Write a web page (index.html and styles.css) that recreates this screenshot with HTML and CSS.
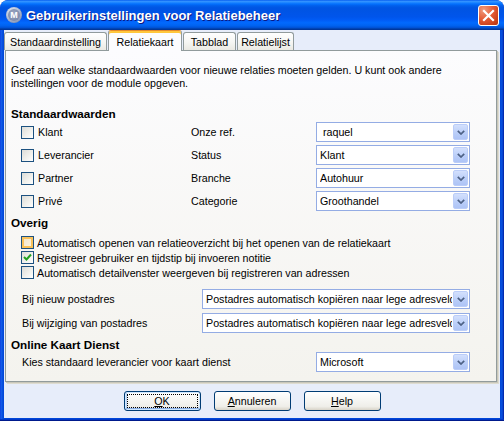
FILE: index.html
```html
<!DOCTYPE html>
<html lang="nl">
<head>
<meta charset="utf-8">
<title>Gebruikerinstellingen voor Relatiebeheer</title>
<link rel="stylesheet" href="styles.css">
</head>
<body>
<div class="window">
  <div class="titlebar">
    <span class="app-icon"><span class="app-ring">M</span></span>
    <span class="title">Gebruikerinstellingen voor Relatiebeheer</span>
    <span class="close">
      <svg width="21" height="21" viewBox="0 0 21 21"><path d="M6 6 L15 15 M15 6 L6 15" stroke="#fff" stroke-width="2.2" stroke-linecap="square" fill="none"/></svg>
    </span>
  </div>
  <div class="client">
    <div class="tabs">
      <div class="tab tab-std">Standaardinstelling</div>
      <div class="tab tab-active">Relatiekaart</div>
      <div class="tab tab-tab">Tabblad</div>
      <div class="tab tab-lijst">Relatielijst</div>
    </div>
    <div class="panel">
      <p class="intro">Geef aan welke standaardwaarden voor nieuwe relaties moeten gelden. U kunt ook andere<br>instellingen voor de module opgeven.</p>

      <h2 class="heading">Standaardwaarden</h2>
      <div class="grid-std">
        <div class="chk"><span class="box"></span>Klant</div>
        <div class="lbl">Onze ref.</div>
        <div class="combo"><span class="txt">&nbsp;raquel</span><span class="drop"><svg width="8" height="5" viewBox="0 0 8 5"><polyline points="0.8,0.8 4,4 7.2,0.8" fill="none" stroke="#4D6185" stroke-width="1.7"/></svg></span></div>

        <div class="chk"><span class="box"></span>Leverancier</div>
        <div class="lbl">Status</div>
        <div class="combo"><span class="txt">Klant</span><span class="drop"><svg width="8" height="5" viewBox="0 0 8 5"><polyline points="0.8,0.8 4,4 7.2,0.8" fill="none" stroke="#4D6185" stroke-width="1.7"/></svg></span></div>

        <div class="chk"><span class="box"></span>Partner</div>
        <div class="lbl">Branche</div>
        <div class="combo"><span class="txt">Autohuur</span><span class="drop"><svg width="8" height="5" viewBox="0 0 8 5"><polyline points="0.8,0.8 4,4 7.2,0.8" fill="none" stroke="#4D6185" stroke-width="1.7"/></svg></span></div>

        <div class="chk"><span class="box"></span>Privé</div>
        <div class="lbl">Categorie</div>
        <div class="combo"><span class="txt">Groothandel</span><span class="drop"><svg width="8" height="5" viewBox="0 0 8 5"><polyline points="0.8,0.8 4,4 7.2,0.8" fill="none" stroke="#4D6185" stroke-width="1.7"/></svg></span></div>
      </div>

      <h2 class="heading heading-overig">Overig</h2>
      <div class="checks">
        <div class="chk chk-row"><span class="box box-hover"></span>Automatisch openen van relatieoverzicht bij het openen van de relatiekaart</div>
        <div class="chk chk-row"><span class="box"><svg width="11" height="11" viewBox="0 0 11 11"><polyline points="2,5 4.5,7.5 9,2.5" fill="none" stroke="#21A121" stroke-width="2"/></svg></span>Registreer gebruiker en tijdstip bij invoeren notitie</div>
        <div class="chk chk-row"><span class="box"></span>Automatisch detailvenster weergeven bij registreren van adressen</div>
      </div>

      <div class="grid-post">
        <div class="lbl">Bij nieuw postadres</div>
        <div class="combo"><span class="txt">Postadres automatisch kopiëren naar lege adresvelden</span><span class="drop"><svg width="8" height="5" viewBox="0 0 8 5"><polyline points="0.8,0.8 4,4 7.2,0.8" fill="none" stroke="#4D6185" stroke-width="1.7"/></svg></span></div>
        <div class="lbl">Bij wijziging van postadres</div>
        <div class="combo"><span class="txt">Postadres automatisch kopiëren naar lege adresvelden</span><span class="drop"><svg width="8" height="5" viewBox="0 0 8 5"><polyline points="0.8,0.8 4,4 7.2,0.8" fill="none" stroke="#4D6185" stroke-width="1.7"/></svg></span></div>
      </div>

      <h2 class="heading heading-online">Online Kaart Dienst</h2>
      <div class="grid-kaart">
        <div class="lbl">Kies standaard leverancier voor kaart dienst</div>
        <div class="combo"><span class="txt">Microsoft</span><span class="drop"><svg width="8" height="5" viewBox="0 0 8 5"><polyline points="0.8,0.8 4,4 7.2,0.8" fill="none" stroke="#4D6185" stroke-width="1.7"/></svg></span></div>
      </div>
    </div>
    <div class="buttons">
      <div class="xpbtn xpbtn-default"><span><u>O</u>K</span></div>
      <div class="xpbtn"><span><u>A</u>nnuleren</span></div>
      <div class="xpbtn"><span><u>H</u>elp</span></div>
    </div>
  </div>
</div>
</body>
</html>
```
FILE: styles.css
```css
* { box-sizing: border-box; }
html, body { margin: 0; padding: 0; }
body {
  width: 504px;
  height: 421px;
  overflow: hidden;
  background: #ffffff;
  font-family: "Liberation Sans", Arial, sans-serif;
  font-size: 10.7px;
  color: #000;
}

.window {
  width: 504px;
  height: 421px;
  display: flex;
  flex-direction: column;
  padding: 0 4px 3px 4px;
  border-radius: 8px 8px 0 0;
  overflow: hidden;
  background: linear-gradient(to right, #0831D9 0, #1662EE 1px, #0A52E0 2px, #0046D8 4px, #0046D8 500px, #0A52E0 502px, #001EA0 504px);
  box-shadow: inset 0 -1px 0 #001A8C, inset 0 -2px 0 #0038C8;
}

.titlebar {
  height: 30px;
  margin: 0 -4px;
  display: flex;
  align-items: center;
  gap: 4px;
  padding: 0 5px 0 6px;
  border-radius: 8px 8px 0 0;
  background: linear-gradient(to bottom, #0058EE 0%, #3593FF 4%, #288EFF 7%, #127DFF 10%, #036FFC 14%, #0262EE 18%, #0057E5 24%, #0054E3 30%, #0055EB 56%, #005BF5 66%, #026AFE 76%, #0062EF 86%, #0052D6 92%, #0040AB 96%, #003092 100%);
}

.app-icon {
  width: 16px;
  height: 16px;
  border-radius: 50%;
  background: radial-gradient(circle at 40% 35%, #F4F6FA 0%, #B9C3D8 45%, #7C8CAE 80%, #55668A 100%);
  display: flex;
  align-items: center;
  justify-content: center;
}
.app-ring {
  width: 12px;
  height: 12px;
  border-radius: 50%;
  background: radial-gradient(circle at 45% 40%, #9FAAC4, #6E7FA3);
  color: #fff;
  font-weight: bold;
  font-size: 9px;
  line-height: 12px;
  text-align: center;
}

.title {
  color: #fff;
  font-weight: bold;
  font-size: 13px;
  text-shadow: 1px 1px 0 #0A1883;
  white-space: nowrap;
}

.close {
  margin-left: auto;
  width: 21px;
  height: 21px;
  border: 1px solid #fff;
  border-radius: 3px;
  background: radial-gradient(circle at 25% 20%, #F09B7E 0%, #E45C36 45%, #C8401A 80%, #B03212 100%);
  display: flex;
  align-items: center;
  justify-content: center;
}
.close svg { display: block; margin: -1px; }

.client {
  flex: 1;
  display: flex;
  flex-direction: column;
  background: #E7EDFA;
}

.tabs {
  display: flex;
  height: 20px;
  gap: 1px;
}
.tab {
  height: 18px;
  margin-top: 2px;
  border: 1px solid #919B9C;
  border-bottom: none;
  border-radius: 3px 3px 0 0;
  background: linear-gradient(#FFFFFF, #F6F6F3 55%, #EAE9E3);
  display: flex;
  align-items: center;
  justify-content: center;
  padding-top: 1px;
  white-space: nowrap;
}
.tab-std { width: 103px; }
.tab-tab { width: 53px; }
.tab-lijst { width: 57px; }
.tab-active {
  width: 74px;
  height: 21px;
  margin-top: 0;
  padding-top: 2px;
  border-top: 1px solid #E68B2C;
  box-shadow: inset 0 2px 0 #FFC73C;
  background: #FCFCFE;
  position: relative;
  z-index: 1;
}

.panel {
  width: 492px;
  height: 332px;
  margin-left: 1px;
  border: 1px solid #919B9C;
  background: linear-gradient(#FCFCFE, #F4F3EE);
  box-shadow: 1px 1px 0 #C9C7BA, 2px 2px 0 #DEDCD0;
  padding: 13px 0 0 5px;
}

.intro {
  margin: 0;
  line-height: 13px;
  white-space: nowrap;
}

.heading {
  margin: 17px 0 0 0;
  font-size: 11.7px;
  font-weight: bold;
  line-height: 13px;
}
.heading-overig { margin-top: 5px; }
.heading-online { margin-top: 5px; }

.grid-std {
  display: grid;
  grid-template-columns: 170px 125px 154px;
  grid-auto-rows: 20px;
  row-gap: 3px;
  margin: 2px 0 0 10px;
  align-items: center;
}

.chk {
  display: flex;
  align-items: center;
  gap: 4px;
  white-space: nowrap;
}
.box {
  width: 13px;
  height: 13px;
  flex: none;
  border: 1px solid #1C5180;
  background: linear-gradient(135deg, #DCDCD7 0%, #F2F2EE 60%, #FFFFFF 100%);
  display: flex;
  align-items: center;
  justify-content: center;
}
.box-hover {
  box-shadow: inset 0 0 0 2px #F9C25A;
  background: linear-gradient(135deg, #F0E4C8, #FFF6E2);
}

.checks {
  margin: 6px 0 0 10px;
  display: flex;
  flex-direction: column;
}
.chk-row {
  height: 15px;
  gap: 3px;
}

.lbl { white-space: nowrap; }

.combo {
  height: 20px;
  border: 1px solid #94ACE4;
  background: #fff;
  display: flex;
  align-items: center;
  padding-left: 3px;
}
.combo .txt {
  flex: 1;
  overflow: hidden;
  white-space: nowrap;
}
.drop {
  flex: none;
  width: 15px;
  height: 16px;
  margin: 0 1px 0 1px;
  border: 1px solid #BBCDF8;
  border-radius: 2px;
  background: linear-gradient(#D3E0FD, #B9CDF8 60%, #AEC4F6);
  display: flex;
  align-items: center;
  justify-content: center;
}
.drop svg { display: block; }

.grid-post {
  display: grid;
  grid-template-columns: 180px 268px;
  grid-auto-rows: 20px;
  row-gap: 4px;
  margin: 9px 0 0 11px;
  align-items: center;
}

.grid-kaart {
  display: grid;
  grid-template-columns: 294px 154px;
  grid-auto-rows: 20px;
  margin: 1px 0 0 11px;
  align-items: center;
}

.buttons {
  display: flex;
  justify-content: center;
  gap: 13px;
  margin-top: 9px;
}
.xpbtn {
  width: 77px;
  height: 20px;
  border: 1px solid #003C74;
  border-radius: 3px;
  background: linear-gradient(#FFFFFF 0%, #F7F7F4 40%, #EFEEE9 80%, #D8D3C8 100%);
  display: flex;
  align-items: center;
  justify-content: center;
}
.xpbtn-default {
  box-shadow: inset 0 0 0 1px #CEE7FF, inset 0 -1px 0 1px #89ADE4, inset 1px 0 0 1px #BCD4F6;
  outline: 1px dotted #000;
  outline-offset: -4px;
}
.xpbtn u { text-decoration: underline; }
```
